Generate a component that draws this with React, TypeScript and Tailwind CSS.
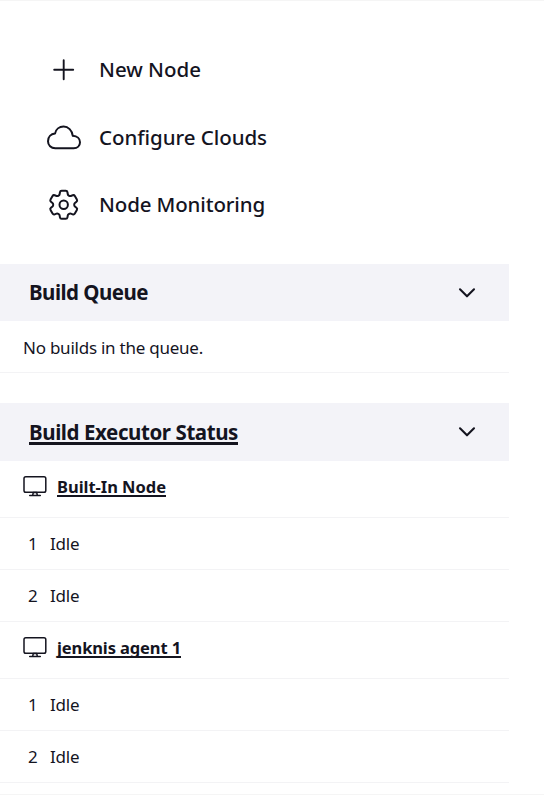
import React from 'react';

function TaskRow({ icon, label, width }: { icon: React.ReactNode; label: string; width: number }) {
  return (
    <li className="flex h-[67.5px] items-center">
      <span className="ml-[44px] flex w-[40px] shrink-0 justify-center">{icon}</span>
      <span className="ml-[15px]">
        <FitText width={width} size={20.5} weight={500}>{label}</FitText>
      </span>
    </li>
  );
}

/* Single line of text stretched or tightened to a fixed width. */
function FitText({ width, size, weight, children }: { width: number; size: number; weight: number; children: string }) {
  const ref = React.useRef<HTMLSpanElement>(null);
  React.useLayoutEffect(() => {
    const el = ref.current;
    if (!el) return;
    el.style.letterSpacing = '0px';
    const natural = el.getBoundingClientRect().width;
    el.style.letterSpacing = `${(width - natural) / children.length}px`;
  }, [width, size, weight, children]);
  return (
    <span ref={ref} className="whitespace-nowrap" style={{ fontSize: size, fontWeight: weight }}>
      {children}
    </span>
  );
}

function Plus() {
  return (
    <svg width="40" height="40" viewBox="0 0 40 40" fill="none" stroke="currentColor" strokeWidth="1.9" strokeLinecap="round">
      <path d="M19.7 10.2v19M10.2 19.7h19" />
    </svg>
  );
}

function Cloud() {
  return (
    <svg width="40" height="40" viewBox="0 0 40 40" fill="none" stroke="currentColor" strokeWidth="2" strokeLinejoin="round">
      <path d="M11 16.6C11.8 12.4 15.300 9.600 19.600 9.600c4.600 0 8.500 3.600 9.200 9.200 4.300.300 7.200 2.800 7.200 6.400 0 3.600-2.700 6-6.300 6H11.300C7 31.200 4 28.300 4 24.300c0-4.200 2.900-7.300 7-7.700Z" />
    </svg>
  );
}

function Gear() {
  return (
    <svg width="40" height="40" viewBox="0 0 40 40" fill="none" stroke="currentColor" strokeLinejoin="round">
      <path
        transform="translate(.98 1.08) scale(1.56)"
        strokeWidth="1.28"
        d="M9.594 3.940c.090-.542.560-.940 1.110-.940h2.593c.550 0 1.020.398 1.110.940l.213 1.281c.063.374.313.686.645.870.074.040.147.083.220.127.325.196.720.257 1.075.124l1.217-.456a1.125 1.125 0 0 1 1.370.490l1.296 2.247a1.125 1.125 0 0 1-.260 1.431l-1.003.827c-.293.241-.438.613-.430.992a7.723 7.723 0 0 1 0 .255c-.008.378.137.750.430.991l1.004.827c.424.350.534.955.260 1.430l-1.298 2.247a1.125 1.125 0 0 1-1.369.491l-1.217-.456c-.355-.133-.750-.072-1.076.124a6.470 6.470 0 0 1-.220.128c-.331.183-.581.495-.644.869l-.213 1.281c-.090.543-.560.940-1.110.940h-2.594c-.550 0-1.019-.398-1.110-.940l-.213-1.281c-.062-.374-.312-.686-.644-.870a6.520 6.520 0 0 1-.220-.127c-.325-.196-.720-.257-1.076-.124l-1.217.456a1.125 1.125 0 0 1-1.369-.490l-1.297-2.247a1.125 1.125 0 0 1 .260-1.431l1.004-.827c.292-.240.437-.613.430-.991a6.932 6.932 0 0 1 0-.255c.007-.380-.138-.751-.430-.992l-1.004-.827a1.125 1.125 0 0 1-.260-1.430l1.297-2.247a1.125 1.125 0 0 1 1.370-.491l1.216.456c.356.133.751.072 1.076-.124.072-.044.146-.086.220-.128.332-.183.582-.495.644-.869l.214-1.280Z"
      />
      <circle cx="19.700" cy="19.800" r="4.200" strokeWidth="2" />
    </svg>
  );
}

function Chevron() {
  return (
    <svg width="20" height="14" viewBox="0 0 20 14" fill="none" stroke="currentColor" strokeWidth="2.100" strokeLinecap="round" strokeLinejoin="round">
      <path d="M3 3.300l7 7 7-7" />
    </svg>
  );
}

function Monitor() {
  return (
    <svg className="shrink-0" width="24" height="22" viewBox="0 0 24 22" fill="none" stroke="currentColor" strokeWidth="1.500" strokeLinecap="round" strokeLinejoin="round">
      <rect x="1" y="1.700" width="21.800" height="15.600" rx="1.800" />
      <path d="M6.700 20.400h10.600M9.700 20.200l.6-2.700h3.400l.6 2.700" />
    </svg>
  );
}

function PaneHeader({ title, width, underlined = false }: { title: string; width: number; underlined?: boolean }) {
  return (
    <div className="flex h-full items-center justify-between bg-[#f3f3f8] pr-[32px] pl-[29px]">
      <h2 className={underlined ? 'underline decoration-[3px] underline-offset-[2px] [text-decoration-skip-ink:none]' : ''}>
        <FitText width={width} size={20.5} weight={700}>{title}</FitText>
      </h2>
      <Chevron />
    </div>
  );
}

function NodeRow({ name, width }: { name: string; width: number }) {
  return (
    <div className="flex h-[57px] items-start border-b border-[#f3f3f5] pt-[14px] pl-[23px]">
      <Monitor />
      <a className="ml-[10px] leading-[24px] underline decoration-2 underline-offset-[2px] [text-decoration-skip-ink:none]">
        <FitText width={width} size={16.5} weight={700}>{name}</FitText>
      </a>
    </div>
  );
}

function ExecutorRow({ number }: { number: number }) {
  return (
    <div className="flex h-[52px] items-center border-b border-[#f3f3f5] pl-[28px] text-[17px]">
      <span className="w-[22px]">{number}</span>
      <FitText width={29.5} size={17} weight={400}>Idle</FitText>
    </div>
  );
}

export default function App() {
  return (
    <div className="flex h-[795px] w-[544px] flex-col overflow-hidden border-t border-[#f5f5f5] bg-white font-['Noto_Sans','Open_Sans',sans-serif] text-[#14141f]">
      <ul className="h-[263px] pt-[35px]">
        <TaskRow icon={<Plus />} label="New Node" width={102} />
        <TaskRow icon={<Cloud />} label="Configure Clouds" width={168} />
        <TaskRow icon={<Gear />} label="Node Monitoring" width={166} />
      </ul>
      <section className="w-[509px]">
        <div className="h-[57px]"><PaneHeader title="Build Queue" width={119} /></div>
        <div className="flex h-[52px] items-center border-b border-[#f3f3f5] pt-[3px] pl-[23px]">
          <FitText width={180} size={17} weight={400}>No builds in the queue.</FitText>
        </div>
      </section>
      <section className="mt-[30px] w-[509px]">
        <div className="h-[58px]"><PaneHeader title="Build Executor Status" width={209} underlined /></div>
        <NodeRow name="Built-In Node" width={109} />
        <ExecutorRow number={1} />
        <ExecutorRow number={2} />
        <NodeRow name="jenknis agent 1" width={124} />
        <ExecutorRow number={1} />
        <ExecutorRow number={2} />
      </section>
      <div className="mt-[11px] h-px shrink-0 bg-[#f5f5f5]" />
    </div>
  );
}
